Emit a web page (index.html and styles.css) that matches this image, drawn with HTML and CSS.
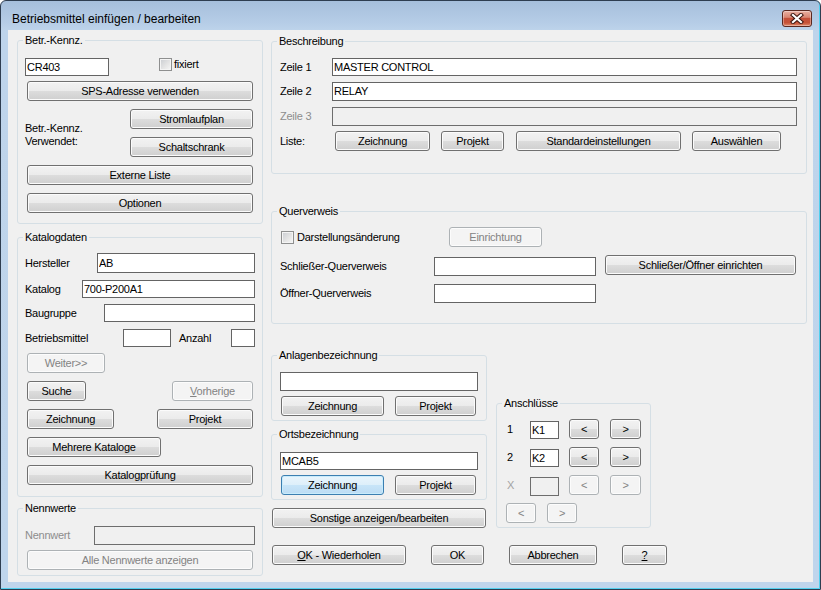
FILE: index.html
```html
<!DOCTYPE html>
<html lang="de">
<head>
<meta charset="utf-8">
<title>Betriebsmittel einfügen / bearbeiten</title>
<link rel="stylesheet" href="styles.css">
</head>
<body>
<div class="window">
  <div class="titlebar">
    <span class="title">Betriebsmittel einfügen / bearbeiten</span>
    <button class="close" aria-label="Schließen">
      <svg width="14" height="11" viewBox="0 0 14 11"><path d="M3 2 L11 9 M11 2 L3 9" stroke="#3d1610" stroke-width="4.2" stroke-linecap="square"/><path d="M3 2 L11 9 M11 2 L3 9" stroke="#ffffff" stroke-width="2.2" stroke-linecap="square"/></svg>
    </button>
  </div>
  <div class="client">
    <div class="col-left">
      <fieldset class="gb gb-kennz">
        <legend>Betr.-Kennz.</legend>
        <div class="gb-body">
          <div class="row h18 mt11">
            <input class="tb w84" value="CR403">
            <label class="chk-label ml50"><input type="checkbox" class="chk">fixiert</label>
          </div>
          <button class="btn full mt5">SPS-Adresse verwenden</button>
          <div class="row mt8">
            <div class="lbl-2 mt13">Betr.-Kennz.<br>Verwendet:</div>
            <div class="stack w123 ml-auto mr2">
              <button class="btn">Stromlaufplan</button>
              <button class="btn mt8">Schaltschrank</button>
            </div>
          </div>
          <button class="btn full mt8">Externe Liste</button>
          <button class="btn full mt8">Optionen</button>
        </div>
      </fieldset>

      <fieldset class="gb gb-katalog">
        <legend>Katalogdaten</legend>
        <div class="gb-body">
          <div class="row h20 mt9"><span>Hersteller</span><input class="tb h20 w158 ml-auto" value="AB"></div>
          <div class="row h18 mt7"><span>Katalog</span><input class="tb w173 ml-auto" value="700-P200A1"></div>
          <div class="row h18 mt6"><span>Baugruppe</span><input class="tb w151 ml-auto" value=""></div>
          <div class="row h18 mt7"><span class="w98">Betriebsmittel</span><input class="tb w48" value=""><span class="ml8">Anzahl</span><input class="tb w24 ml-auto" value=""></div>
          <div class="row mt6"><button class="btn w78 ml2" disabled>Weiter&gt;&gt;</button></div>
          <div class="row mt8"><button class="btn w59 ml2">Suche</button><button class="btn w81 ml-auto mr2" disabled><u>V</u>orherige</button></div>
          <div class="row mt8"><button class="btn w87 ml2">Zeichnung</button><button class="btn w96 ml-auto mr2">Projekt</button></div>
          <div class="row mt8"><button class="btn w134 ml2">Mehrere Kataloge</button></div>
          <button class="btn full mt8">Katalogprüfung</button>
        </div>
      </fieldset>

      <fieldset class="gb gb-nenn">
        <legend>Nennwerte</legend>
        <div class="gb-body">
          <div class="row h19 mt11"><span class="dis-text">Nennwert</span><input class="tb h19 w161 ml-auto" value="" disabled></div>
          <button class="btn full mt5" disabled>Alle Nennwerte anzeigen</button>
        </div>
      </fieldset>
    </div>

    <div class="col-right">
      <fieldset class="gb gb-beschr">
        <legend>Beschreibung</legend>
        <div class="gb-body body-r">
          <div class="row h18 mt10"><span class="w52">Zeile 1</span><input class="tb grow" value="MASTER CONTROL"></div>
          <div class="row h19 mt6"><span class="w52">Zeile 2</span><input class="tb h19 grow" value="RELAY"></div>
          <div class="row h19 mt6"><span class="w52 dis-text">Zeile 3</span><input class="tb h19 grow" value="" disabled></div>
          <div class="row h20 mt5">
            <span class="w55">Liste:</span>
            <button class="btn w95">Zeichnung</button>
            <button class="btn w63 ml11">Projekt</button>
            <button class="btn w165 ml12">Standardeinstellungen</button>
            <button class="btn w89 ml11">Auswählen</button>
          </div>
        </div>
      </fieldset>

      <fieldset class="gb gb-quer">
        <legend>Querverweis</legend>
        <div class="gb-body body-r">
          <div class="row h20 mt9">
            <label class="chk-label w169 self-center"><input type="checkbox" class="chk ml1">Darstellungsänderung</label>
            <button class="btn w93" disabled>Einrichtung</button>
          </div>
          <div class="row h21 mt8">
            <span class="w154">Schließer-Querverweis</span>
            <input class="tb h19 w162 mt2" value="">
            <button class="btn w191 ml9">Schließer/Öffner einrichten</button>
          </div>
          <div class="row h19 mt8">
            <span class="w154">Öffner-Querverweis</span>
            <input class="tb h19 w162" value="">
          </div>
        </div>
      </fieldset>

      <div class="lower">
        <div class="sub-left">
          <fieldset class="gb gb-small">
            <legend>Anlagenbezeichnung</legend>
            <div class="gb-body body-s">
              <input class="tb h19 w198 mt10" value="">
              <div class="row mt5"><button class="btn w103 ml1">Zeichnung</button><button class="btn w81 ml11">Projekt</button></div>
            </div>
          </fieldset>
          <fieldset class="gb gb-small mt7">
            <legend>Ortsbezeichnung</legend>
            <div class="gb-body body-s">
              <input class="tb w198 mt11" value="MCAB5">
              <div class="row mt5"><button class="btn focus w103 ml1">Zeichnung</button><button class="btn w81 ml11">Projekt</button></div>
            </div>
          </fieldset>
          <button class="btn w214 ml1 mt8">Sonstige anzeigen/bearbeiten</button>
        </div>

        <fieldset class="gb gb-ansch">
          <legend>Anschlüsse</legend>
          <div class="gb-body body-a">
            <div class="row h20 mt9"><span class="w23">1</span><input class="tb w29 mt2" value="K1"><button class="btn w30 ml10">&lt;</button><button class="btn w31 ml11">&gt;</button></div>
            <div class="row h20 mt8"><span class="w23">2</span><input class="tb w29 mt2" value="K2"><button class="btn w30 ml10">&lt;</button><button class="btn w31 ml11">&gt;</button></div>
            <div class="row h20 mt8"><span class="w23 dis-x">X</span><input class="tb h19 w29 mt2" value="" disabled><button class="btn w30 ml10" disabled>&lt;</button><button class="btn w31 ml11" disabled>&gt;</button></div>
            <div class="row h20 mt8"><button class="btn w30 mln1" disabled>&lt;</button><button class="btn w30 ml11" disabled>&gt;</button></div>
          </div>
        </fieldset>
      </div>

      <div class="row actions">
        <button class="btn w134 ml1"><u>O</u>K - Wiederholen</button>
        <button class="btn w53 ml25">OK</button>
        <button class="btn w88 ml25">Abbrechen</button>
        <button class="btn w45 ml25"><u>?</u></button>
      </div>
    </div>
  </div>
</div>
</body>
</html>
```
FILE: styles.css
```css
* { box-sizing: border-box; }
html, body { margin: 0; padding: 0; }
body {
  width: 821px;
  height: 590px;
  overflow: hidden;
  background: #ffffff;
  font-family: "Liberation Sans", Arial, sans-serif;
  font-size: 11px;
  letter-spacing: -0.25px;
  color: #000;
}

.window {
  width: 821px;
  height: 590px;
  border: 1px solid #2e3d50;
  border-radius: 6px 6px 0 0;
  background: linear-gradient(#a6bfdc 0, #b6cde7 22px, #bed4eb 30px, #bfd5ec 100%);
  box-shadow: inset -1px -1px 0 #52d0ef;
  display: flex;
  flex-direction: column;
}

.titlebar {
  height: 29px;
  flex: none;
  display: flex;
  align-items: flex-start;
  padding-left: 11px;
}
.title {
  margin-top: 11px;
  font-size: 12px;
  line-height: 14px;
  letter-spacing: 0;
  color: #000;
}
.close {
  margin: 9px 8px 0 auto;
  width: 30px;
  height: 17px;
  padding: 0;
  border: 1px solid #5a2820;
  border-radius: 3px;
  background: linear-gradient(#eab0a2 0, #d98673 42%, #c4503a 50%, #c65236 78%, #de8a6c 100%);
  box-shadow: inset 0 0 0 1px rgba(255, 255, 255, 0.35);
  display: flex;
  align-items: center;
  justify-content: center;
}
.close svg { display: block; }

.client {
  margin: 0 7px;
  height: 552px;
  flex: none;
  background: #f0f0f0;
  display: flex;
  gap: 8px;
  padding: 4px 6px 0 9px;
}
.col-left { width: 246px; flex: none; display: flex; flex-direction: column; }
.col-right { width: 536px; flex: none; display: flex; flex-direction: column; padding-top: 1px; }

/* group boxes */
.gb {
  margin: 0;
  padding: 0;
  min-width: 0;
  border: 1px solid #d5dfe5;
  border-radius: 3px;
}
.gb legend {
  padding: 0 2px;
  margin-left: 5px;
  line-height: 13px;
  height: 13px;
}
.gb-body { display: flex; flex-direction: column; padding: 0 7px; }
.body-r { padding: 0 9px 0 8px; }
.body-s { padding: 0 8px; }
.body-a { padding: 0 8px 0 10px; }

.gb-kennz { height: 190px; }
.gb-katalog { height: 266px; margin-top: 7px; }
.gb-nenn { height: 74px; margin-top: 5px; }
.gb-beschr { height: 139px; }
.gb-quer { height: 119px; margin-top: 31px; }
.gb-small { height: 72px; }
.gb-ansch { width: 155px; height: 131px; margin: 48px 0 0 9px; flex: none; }

.lower { display: flex; align-items: flex-start; margin-top: 25px; }
.sub-left { width: 216px; flex: none; display: flex; flex-direction: column; }
.actions { margin-top: 17px; }

/* rows */
.row { display: flex; align-items: flex-start; white-space: nowrap; }
.stack { display: flex; flex-direction: column; }
.h18 { height: 18px; line-height: 18px; }
.h19 { height: 19px; line-height: 19px; }
.h20 { height: 20px; line-height: 20px; }
.h21 { height: 21px; line-height: 23px; }
.lbl-2 { line-height: 13px; }
.self-center { align-self: center; }

/* controls */
.btn {
  font: inherit;
  letter-spacing: inherit;
  color: #000;
  height: 20px;
  margin: 0;
  padding: 0;
  border: 1px solid #707070;
  border-radius: 3px;
  background: linear-gradient(#f2f2f2 0, #ebebeb 50%, #dddddd 50%, #cfcfcf 100%);
  box-shadow: inset 0 0 0 1px #fbfbfb;
  line-height: 18px;
  text-align: center;
  white-space: nowrap;
  flex: none;
}
.btn.full { margin-left: 2px; margin-right: 2px; }
.btn:disabled {
  border-color: #adb2b5;
  background: #f4f4f4;
  color: #838383;
  box-shadow: inset 0 0 0 1px #fcfcfc;
}
.btn.focus {
  border-color: #3c7fb1;
  background: linear-gradient(#e9f5fc 0, #ddeffa 50%, #c8e5f8 50%, #bcdcf4 100%);
  box-shadow: inset 0 0 0 1px #c8ecfc;
}

.tb {
  font: inherit;
  letter-spacing: inherit;
  color: #000;
  height: 18px;
  margin: 0;
  padding: 0 1px;
  border: 1px solid #646464;
  border-radius: 0;
  background: #fff;
  flex: none;
  outline: none;
}
.tb.grow { flex: 1 1 auto; width: 10px; }
.tb:disabled { background: #f0f0f0; border-color: #6d6d6d; }
.tb.h19 { height: 19px; }
.tb.h20 { height: 20px; }

.chk-label { display: flex; align-items: center; height: 13px; line-height: 13px; gap: 2px; }
.chk {
  -webkit-appearance: none;
  appearance: none;
  width: 13px;
  height: 13px;
  margin: 0;
  border: 1px solid #8e8f8f;
  background: linear-gradient(135deg, #c9ccd1 0, #e4e4e4 55%, #f7f7f7 100%);
  box-shadow: inset 0 0 0 1px #f4f4f4;
  flex: none;
}
.chk-label.w169 { gap: 3px; }

.dis-text { color: #8d8d8d; }
.dis-x { color: #a3a3a3; font-weight: normal; }

/* sizes */
.w23 { width: 23px; flex: none; }
.w24 { width: 24px; }
.w29 { width: 29px; }
.w30 { width: 30px; }
.w31 { width: 31px; }
.w45 { width: 45px; }
.w48 { width: 48px; }
.w52 { width: 52px; flex: none; }
.w53 { width: 53px; }
.w55 { width: 55px; flex: none; }
.w59 { width: 59px; }
.w63 { width: 63px; }
.w78 { width: 78px; }
.w81 { width: 81px; }
.w84 { width: 84px; }
.w87 { width: 87px; }
.w88 { width: 88px; }
.w89 { width: 89px; }
.w93 { width: 93px; }
.w95 { width: 95px; }
.w96 { width: 96px; }
.w98 { width: 98px; flex: none; }
.w103 { width: 103px; }
.w123 { width: 123px; flex: none; }
.w134 { width: 134px; }
.w151 { width: 151px; }
.w154 { width: 154px; flex: none; }
.w158 { width: 158px; }
.w161 { width: 161px; }
.w162 { width: 162px; }
.w165 { width: 165px; }
.w169 { width: 169px; flex: none; }
.w173 { width: 173px; }
.w191 { width: 191px; }
.w198 { width: 198px; }
.w214 { width: 214px; }

/* spacing */
.mt2 { margin-top: 2px; }
.mt5 { margin-top: 5px; }
.mt6 { margin-top: 6px; }
.mt7 { margin-top: 7px; }
.mt8 { margin-top: 8px; }
.mt9 { margin-top: 9px; }
.mt10 { margin-top: 10px; }
.mt11 { margin-top: 11px; }
.mt13 { margin-top: 13px; }
.ml1 { margin-left: 1px; }
.ml2 { margin-left: 2px; }
.mln1 { margin-left: -1px; }
.ml8 { margin-left: 8px; }
.ml9 { margin-left: 9px; }
.ml10 { margin-left: 10px; }
.ml11 { margin-left: 11px; }
.ml12 { margin-left: 12px; }
.ml25 { margin-left: 25px; }
.ml50 { margin-left: 50px; }
.ml-auto { margin-left: auto; }
.mr2 { margin-right: 2px; }
```
